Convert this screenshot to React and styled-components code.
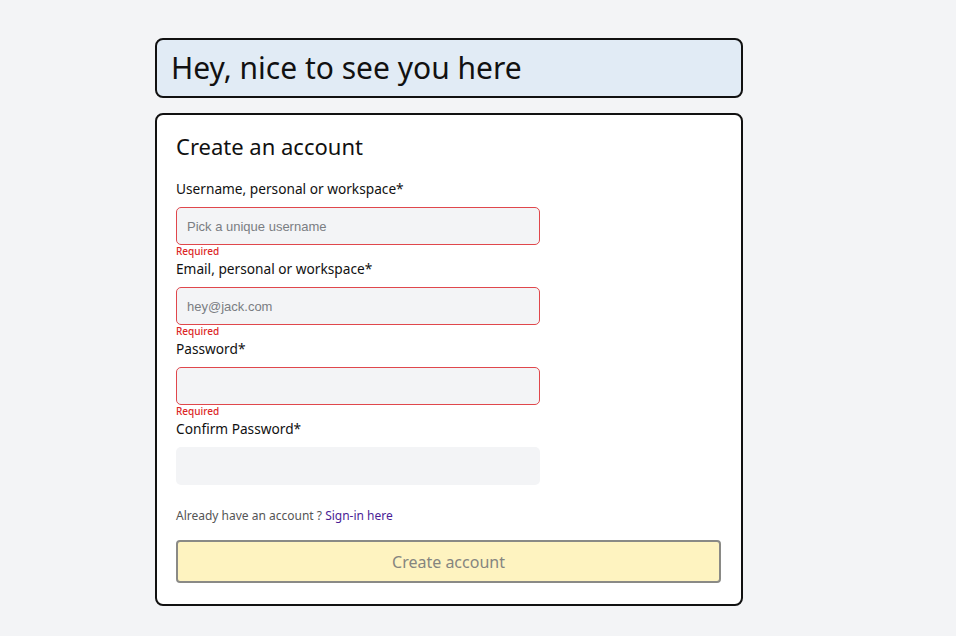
import React from 'react'
import styled, { createGlobalStyle } from 'styled-components'

const GlobalStyle = createGlobalStyle`
  body {
    margin: 0;
    background: #f3f4f6;
    font-family: "Noto Sans", "Open Sans", sans-serif;
    color: #111;
  }
`;

const Page = styled.div`
  padding: 38px 0 0 155px;
  display: flex;
  flex-direction: column;
  gap: 15px;
  width: 588px;
`;

const Banner = styled.div`
  background: #e1ebf5;
  border: 2px solid #111;
  border-radius: 8px;
  height: 56px;
  display: flex;
  align-items: center;
  padding: 0 14px;

  h1 {
    margin: 0 0 2px;
    font-size: 30px;
    font-weight: 400;
    color: #111;
  }
`;

const Card = styled.form`
  background: #fff;
  border: 2px solid #111;
  border-radius: 8px;
  padding: 16px 19px 21px 19px;
  display: flex;
  flex-direction: column;

  h2 {
    margin: 0 0 19px;
    font-size: 22px;
    font-weight: 400;
    line-height: 30px;
  }
`;

const Field = styled.div`
  display: flex;
  flex-direction: column;
  margin-bottom: ${props => props.$error ? '0' : '23px'};
`;

const Label = styled.label`
  font-size: 13.7px;
  line-height: 18px;
  margin-bottom: 9px;
`;

const Input = styled.input`
  box-sizing: border-box;
  width: 364px;
  height: 38px;
  border: ${props => props.$error ? '1.5px solid #e0474c' : '1.5px solid transparent'};
  border-radius: 5px;
  background: #f3f4f6;
  padding: 0 10px;
  font-family: "Liberation Sans", Arial, sans-serif;
  font-size: 13px;
  outline: none;

  &::placeholder {
    color: #7a7d82;
  }
`;

const ErrorText = styled.span`
  color: #dc2626;
  font-size: 10px;
  font-weight: 500;
  line-height: 12px;
  margin: 0 0 3px;
`;

const Footer = styled.p`
  margin: 0 0 16px;
  font-size: 12px;
  line-height: 16px;
  color: #555;

  a {
    color: #4a1d96;
    text-decoration: none;
  }
`;

const Submit = styled.button`
  height: 43px;
  width: 545px;
  background: #fef3c0;
  border: 2px solid #8a8a86;
  border-radius: 4px;
  color: #85857f;
  font-family: inherit;
  font-size: 16px;
`;

const fields = [
  { label: 'Username, personal or workspace*', placeholder: 'Pick a unique username', error: true },
  { label: 'Email, personal or workspace*', placeholder: 'hey@jack.com', error: true },
  { label: 'Password*', placeholder: '', error: true, type: 'password' },
  { label: 'Confirm Password*', placeholder: '', error: false, type: 'password' },
];

export default function App() {
  return (
    <>
      <GlobalStyle />
      <Page>
        <Banner>
          <h1>Hey, nice to see you here</h1>
        </Banner>
        <Card onSubmit={e => e.preventDefault()}>
          <h2>Create an account</h2>
          {fields.map(f => (
            <Field key={f.label} $error={f.error}>
              <Label>{f.label}</Label>
              <Input $error={f.error} placeholder={f.placeholder} type={f.type || 'text'} />
              {f.error && <ErrorText>Required</ErrorText>}
            </Field>
          ))}
          <Footer>
            Already have an account ? <a href="#">Sign-in here</a>
          </Footer>
          <Submit type="submit">Create account</Submit>
        </Card>
      </Page>
    </>
  )
}
